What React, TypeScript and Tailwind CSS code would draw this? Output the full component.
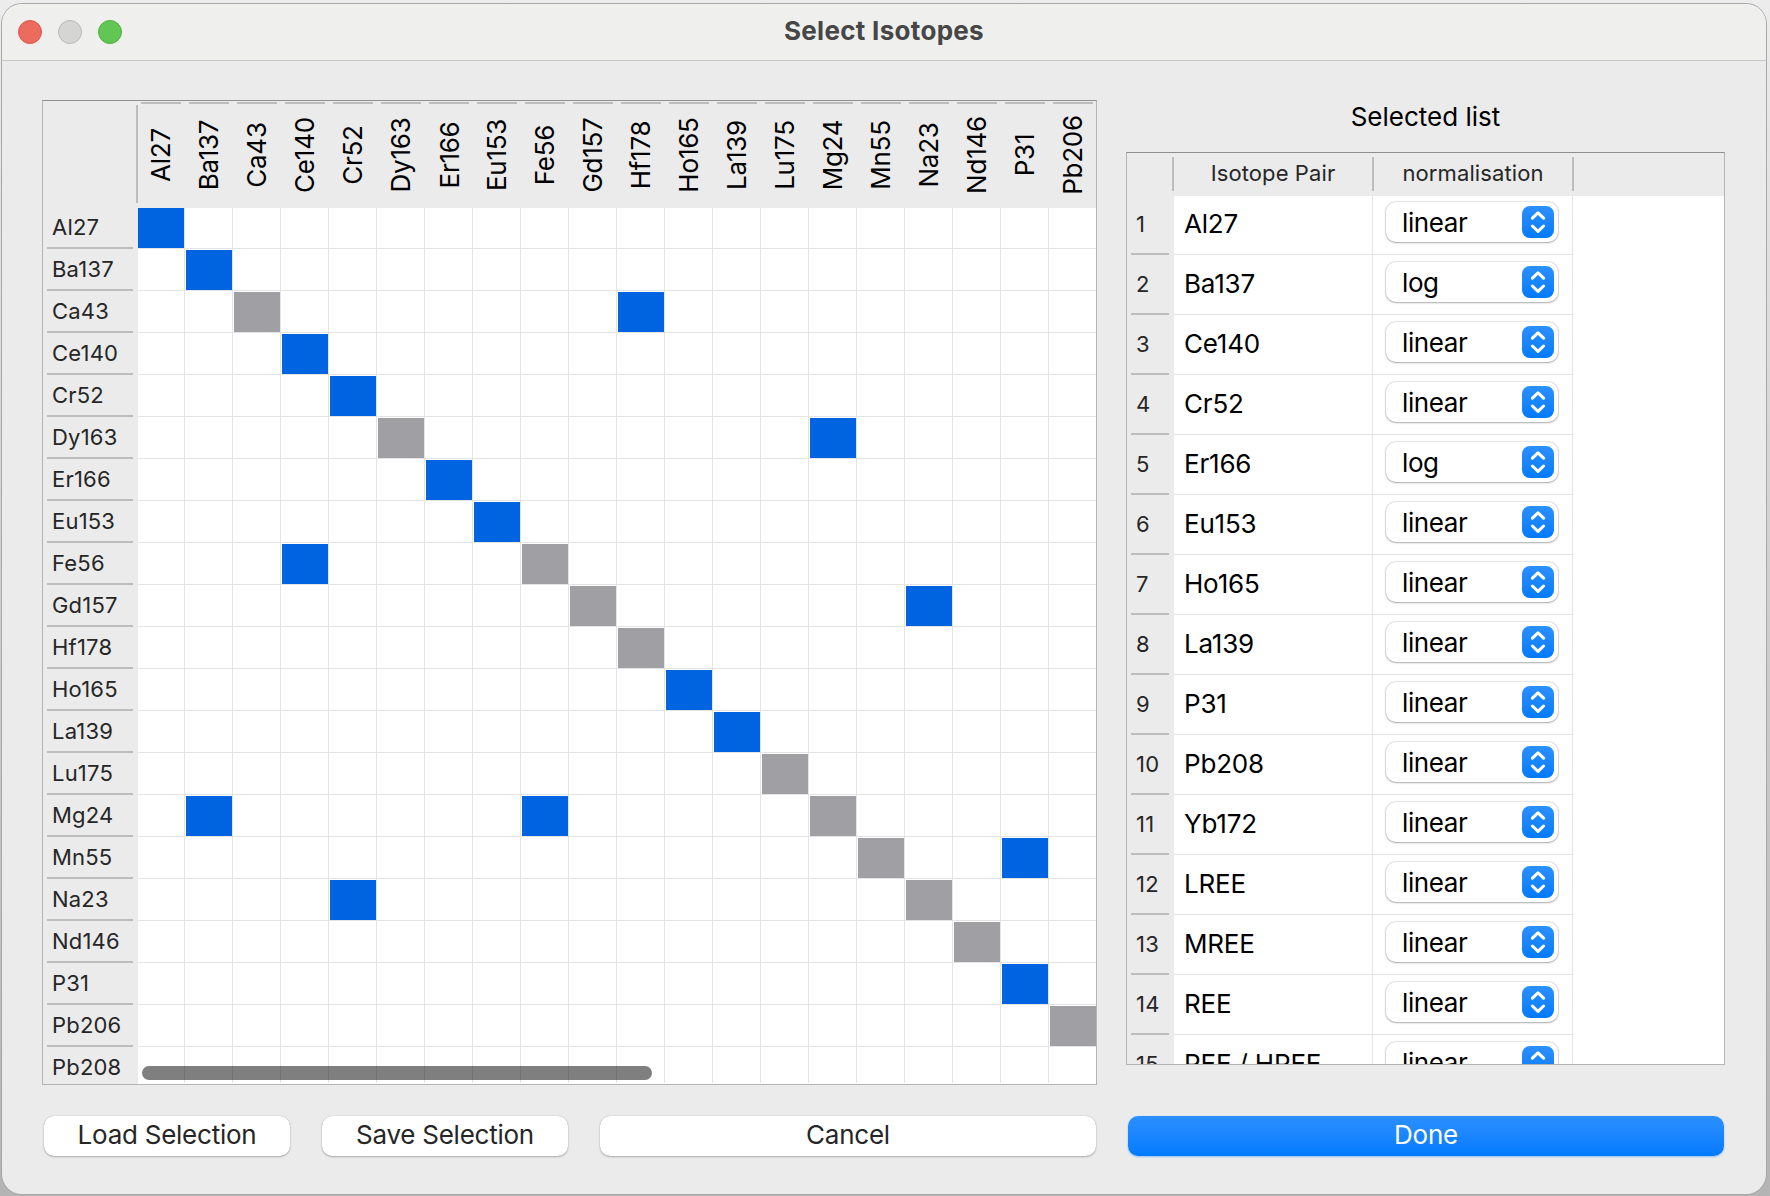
import React from "react";

const isotopes = [
  "Al27", "Ba137", "Ca43", "Ce140", "Cr52", "Dy163", "Er166", "Eu153", "Fe56", "Gd157", "Hf178",
  "Ho165", "La139", "Lu175", "Mg24", "Mn55", "Na23", "Nd146", "P31", "Pb206", "Pb208",
];

const columns = isotopes.slice(0, 20);

const unselected = new Set([2, 5, 8, 9, 10, 13, 14, 15, 16, 17, 19]);

const ratioPairs = new Set(["2-10", "5-14", "8-3", "9-16", "14-1", "14-8", "15-18", "16-4"]);

const selected: [string, string][] = [
  ["Al27", "linear"],
  ["Ba137", "log"],
  ["Ce140", "linear"],
  ["Cr52", "linear"],
  ["Er166", "log"],
  ["Eu153", "linear"],
  ["Ho165", "linear"],
  ["La139", "linear"],
  ["P31", "linear"],
  ["Pb208", "linear"],
  ["Yb172", "linear"],
  ["LREE", "linear"],
  ["MREE", "linear"],
  ["REE", "linear"],
  ["REE / HREE", "linear"],
];

function cellColor(row: number, col: number) {
  if (ratioPairs.has(`${row}-${col}`)) return "bg-[#0064e1]";
  if (row === col && row < 20) return unselected.has(row) ? "bg-[#a09fa4]" : "bg-[#0064e1]";
  return "";
}

function TitleBar() {
  return (
    <header className="relative flex h-[57px] shrink-0 items-center border-b border-[#c8c8c8] bg-[#efefed] pl-4">
      <div className="flex gap-4">
        <span className="size-6 rounded-full border border-[#d9574c] bg-[#ed6a5f]" />
        <span className="size-6 rounded-full border border-[#b9b9b7] bg-[#d5d5d3]" />
        <span className="size-6 rounded-full border border-[#52ae41] bg-[#61c654]" />
      </div>
      <h1 className="absolute inset-x-0 top-0 pt-[11px] text-center text-[26px] leading-8 font-bold tracking-[0.3px] text-[#464646]">
        Select Isotopes
      </h1>
    </header>
  );
}

function Matrix() {
  return (
    <div className="relative flex h-[985px] w-[1055px] flex-col overflow-hidden border border-[#b4b4b4] border-t-[#8f8f8f] bg-white">
      <div className="flex h-[107px] shrink-0 bg-[#ebebeb]">
        <div className="w-[95px] shrink-0 pt-1">
          <div className="ml-auto h-[98px] w-0.5 bg-[#bdbdbd]" />
        </div>
        <div className="-ml-px flex">
          {columns.map((name) => (
            <div key={name} className="flex h-full w-12 shrink-0 flex-col items-center pt-px">
              <div className="h-0.5 w-10 shrink-0 bg-[#bdbdbd]" />
              <div className="flex h-[102px] w-8 items-center justify-center">
                <span className="-rotate-90 text-[26px] leading-8 whitespace-nowrap tracking-[-0.25px] text-black">
                  {name}
                </span>
              </div>
            </div>
          ))}
        </div>
      </div>
      <div className="flex h-[876px]">
        <div className="-mt-px w-[95px] shrink-0 bg-[#ebebeb]">
          {isotopes.map((name) => (
            <div key={name} className="flex h-[42px] flex-col pr-[5px] pl-1">
              <span className="h-10 pl-[5px] text-[22px] leading-10 tracking-[0.2px] text-[#262626]">{name}</span>
              <div className="h-0.5 shrink-0 bg-[#bdbdbd]" />
            </div>
          ))}
        </div>
        <div className="h-[875px] w-[958px] overflow-hidden">
          <div className="-mt-px -ml-px w-[960px]">
            {isotopes.map((name, row) => (
              <div key={name} className="flex">
                {columns.map((col, c) => (
                  <div key={col} className="h-[42px] w-12 border-r border-b border-[#e4e4e4] pt-px pl-px">
                    <div className={"size-full " + cellColor(row, c)} />
                  </div>
                ))}
              </div>
            ))}
          </div>
        </div>
      </div>
      <div className="absolute bottom-1 left-[99px] h-3.5 w-[510px] rounded-full bg-black/50" />
    </div>
  );
}

function Combo({ value }: { value: string }) {
  return (
    <div className="flex h-10 w-[172px] items-center justify-between rounded-[10px] bg-white pr-1 pl-4 shadow-[0_0_1px_1px_rgba(0,0,0,0.1),0_1px_2px_rgba(0,0,0,0.25)]">
      <span className="pt-0.5 text-[26px] leading-[38px] tracking-[-0.4px] text-black">{value}</span>
      <span className="flex size-8 items-center justify-center rounded-lg bg-linear-to-b from-[#2b90ff] to-[#007aff]">
        <svg
          viewBox="0 0 32 32"
          className="size-8"
          fill="none"
          stroke="white"
          strokeWidth="3"
          strokeLinecap="round"
          strokeLinejoin="round"
        >
          <path d="M10.4 12.2L16 6.8L21.6 12.2" />
          <path d="M10.4 20L16 25.4L21.6 20" />
        </svg>
      </span>
    </div>
  );
}

function SelectedTable() {
  return (
    <div className="flex h-[913px] w-[599px] flex-col overflow-hidden border border-[#b4b4b4] border-t-[#8f8f8f] bg-white">
      <div className="flex h-[43px] shrink-0 bg-[#ebebeb] pt-1 text-[22px] leading-8 tracking-[0.1px] text-[#262626]">
        <div className="h-[34px] w-[47px] border-r-2 border-[#bdbdbd]" />
        <div className="h-[34px] w-[200px] border-r-2 border-[#bdbdbd] text-center">Isotope Pair</div>
        <div className="h-[34px] w-[200px] border-r-2 border-[#bdbdbd] text-center">normalisation</div>
      </div>
      <div className="-mt-px">
        {selected.map(([name, mode], i) => (
          <div key={name} className={i === 0 ? "flex h-[60px] [clip-path:inset(1px_0_0_0)]" : "flex h-[60px]"}>
            <div className="flex w-[47px] shrink-0 flex-col bg-[#ebebeb] pr-[5px] pl-1">
              <span className="h-[58px] pl-[5px] text-[22px] leading-[58px] tracking-[0.2px] text-[#262626]">
                {i + 1}
              </span>
              <div className="h-0.5 bg-[#bdbdbd]" />
            </div>
            <div className="w-[199px] border-r border-b border-[#e4e4e4] pl-2.5 text-[26px] leading-[57px] tracking-[-0.2px] text-black">
              {name}
            </div>
            <div className="w-[200px] border-r border-b border-[#e4e4e4] pt-[7px] pl-[13px]">
              <Combo value={mode} />
            </div>
          </div>
        ))}
      </div>
    </div>
  );
}

function Button({ label, className }: { label: string; className: string }) {
  return (
    <button
      className={
        "flex h-10 items-center justify-center rounded-[10px] pb-0.5 text-[26px] leading-9 whitespace-nowrap " +
        className
      }
    >
      {label}
    </button>
  );
}

const plain =
  "bg-white tracking-[-0.25px] text-[#262626] shadow-[0_0_1px_rgba(0,0,0,0.3),0_1px_2px_rgba(0,0,0,0.25)]";

export default function App() {
  return (
    <div className="h-[1196px] w-[1770px] overflow-hidden bg-linear-to-b from-[#ececec] via-[#cfcfcf] to-[#b4b4b4] pt-1 pl-0.5 font-['Inter',sans-serif]">
      <div className="flex h-[1190px] w-[1764px] flex-col overflow-hidden rounded-[20px] bg-[#ebebeb] shadow-[0_0_0_1px_#a8a8a8]">
        <TitleBar />
        <main className="flex gap-[29px] pt-[39px] pl-10">
          <section>
            <Matrix />
            <div className="mt-[31px] ml-0.5 flex">
              <Button label="Load Selection" className={"mr-8 w-[246px] " + plain} />
              <Button label="Save Selection" className={"mr-8 w-[246px] " + plain} />
              <Button label="Cancel" className={"w-[496px] " + plain} />
            </div>
          </section>
          <section>
            <h2 className="h-[52px] pt-px text-center text-[26px] leading-8 font-normal text-black">Selected list</h2>
            <SelectedTable />
            <div className="mt-[51px] ml-0.5">
              <Button
                label="Done"
                className="w-[596px] bg-linear-to-b from-[#2b90ff] to-[#007aff] tracking-[-0.2px] text-white shadow-[0_1px_2px_rgba(0,122,255,0.4)]"
              />
            </div>
          </section>
        </main>
      </div>
    </div>
  );
}
